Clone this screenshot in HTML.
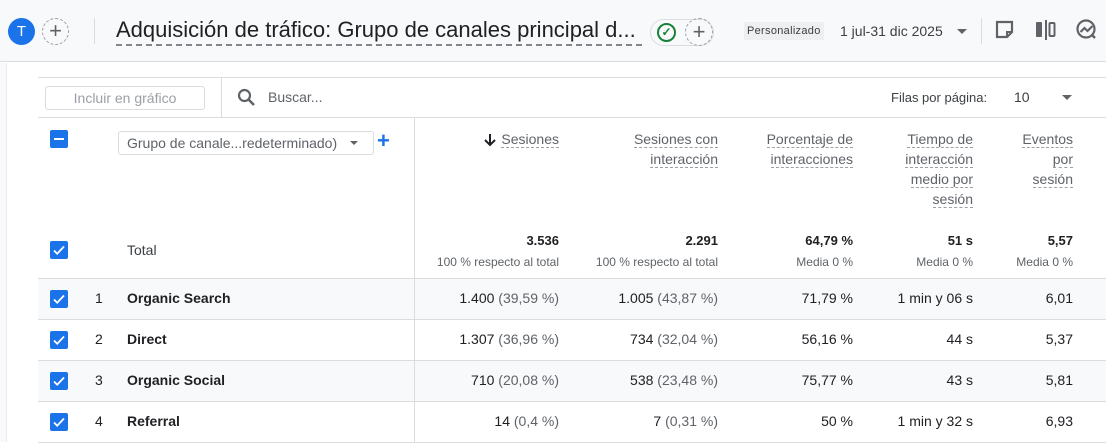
<!DOCTYPE html>
<html><head><meta charset="utf-8"><style>
*{box-sizing:border-box;margin:0;padding:0}
body{width:1106px;height:442px;overflow:hidden;background:#fff;font-family:"Liberation Sans",Arial,sans-serif;color:#202124;position:relative}
.a{position:absolute}
.top{left:0;top:0;width:1106px;height:62px;background:#f8f9fa;border-bottom:1px solid #dadce0}
.r{text-align:right}
.h{font-size:14px;color:#5f6368;line-height:20px}
.h span{border-bottom:1px dashed #9aa0a6}
.cb{width:18px;height:18px;background:#1a73e8;border-radius:2px}
.row{left:38px;width:1068px;height:41px;border-bottom:1px solid #dadce0;font-size:14px}
.g{color:#5f6368}
</style></head><body>
<div class="a top"></div>
<div class="a" style="left:8px;top:18px;width:27px;height:27px;border-radius:50%;background:#1a73e8;color:#fff;font-size:15px;text-align:center;line-height:27px">T</div>
<div class="a" style="left:42px;top:18px;width:27px;height:27px;border-radius:50%;border:1px dashed #9aa0a6;color:#5f6368;font-size:22px;text-align:center;line-height:24px">+</div>
<div class="a" style="left:94px;top:18px;width:1px;height:26px;background:#dadce0"></div>
<div class="a" style="left:116px;top:15px;font-size:22px;line-height:30px;color:#202124;white-space:nowrap;width:526px;overflow:hidden;border-bottom:2px dashed #80868b;height:31px">Adquisición de tráfico: Grupo de canales principal d...</div>
<div class="a" style="left:650px;top:19px;width:64px;height:27px;border:1px solid #dadce0;border-radius:14px"></div>
<div class="a" style="left:657px;top:23px;width:19px;height:19px;border:2px solid #188038;border-radius:50%;color:#188038;font-size:12px;text-align:center;line-height:15px;font-weight:bold">✓</div>
<div class="a" style="left:685px;top:18px;width:28px;height:28px;border-radius:50%;border:1px dashed #9aa0a6;color:#5f6368;font-size:22px;text-align:center;line-height:25px">+</div>
<div class="a" style="left:744px;top:22px;padding:0 3px;background:#edeff1;font-size:11px;color:#3c4043;line-height:18px;letter-spacing:.3px">Personalizado</div>
<div class="a" style="left:840px;top:22px;font-size:14px;color:#3c4043;line-height:18px">1 jul-31 dic 2025</div>
<div class="a" style="left:957px;top:29px;border:5px solid transparent;border-top-color:#5f6368"></div>
<div class="a" style="left:981px;top:18px;width:1px;height:26px;background:#dadce0"></div>
<svg class="a" style="left:994px;top:19px" width="22" height="22" viewBox="0 0 22 22"><path d="M3 3h15v10l-5 5H3z" fill="none" stroke="#5f6368" stroke-width="2.2"/><path d="M13 18v-5h5" fill="none" stroke="#5f6368" stroke-width="2"/></svg>
<svg class="a" style="left:1034px;top:19px" width="24" height="22" viewBox="0 0 24 22"><rect x="2" y="3" width="6" height="15" rx="1" fill="#5f6368"/><rect x="11" y="1" width="2" height="20" fill="#5f6368"/><rect x="15.5" y="4" width="5" height="13" rx="1" fill="none" stroke="#5f6368" stroke-width="2"/></svg>
<svg class="a" style="left:1075px;top:18px" width="24" height="24" viewBox="0 0 24 24"><circle cx="11" cy="11" r="8.5" fill="none" stroke="#5f6368" stroke-width="2.2"/><path d="M5.5 14l4-4 3 3 5-5" fill="none" stroke="#5f6368" stroke-width="2.2"/><path d="M17 17l3 3" stroke="#5f6368" stroke-width="2.5"/></svg>
<div class="a" style="left:0;top:63px;width:7px;height:379px;background:#f8f9fa;border-right:1px solid #e8eaed"></div>
<div class="a" style="left:38px;top:77px;width:1068px;height:1px;background:#dadce0"></div>
<div class="a" style="left:38px;top:117px;width:1068px;height:1px;background:#dadce0"></div>
<div class="a" style="left:221px;top:77px;width:1px;height:41px;background:#dadce0"></div>
<div class="a" style="left:45px;top:86px;width:160px;height:24px;border:1px solid #dadce0;border-radius:3px;font-size:14px;color:#9aa0a6;text-align:center;line-height:22px">Incluir en gráfico</div>
<svg class="a" style="left:236px;top:87px" width="22" height="22" viewBox="0 0 22 22"><circle cx="8.5" cy="8.5" r="5.5" fill="none" stroke="#5f6368" stroke-width="2.2"/><path d="M12.5 12.5l5.5 5.5" stroke="#5f6368" stroke-width="2.6"/></svg>
<div class="a" style="left:268px;top:89px;font-size:14px;color:#5f6368">Buscar...</div>
<div class="a" style="left:891px;top:90px;font-size:13px;color:#3c4043">Filas por página:</div>
<div class="a" style="left:1014px;top:89px;font-size:14px;color:#3c4043">10</div>
<div class="a" style="left:1062px;top:95px;border:5px solid transparent;border-top-color:#5f6368"></div>
<div class="a cb" style="left:50px;top:130px"><div class="a" style="left:4px;top:8px;width:10px;height:2px;background:#fff"></div></div>
<div class="a" style="left:118px;top:131px;width:256px;height:24px;border:1px solid #dadce0;border-radius:3px;font-size:14px;color:#5f6368;line-height:22px;padding-left:8px">Grupo de canale...redeterminado)</div>
<div class="a" style="left:350px;top:141px;border:4px solid transparent;border-top-color:#5f6368"></div>
<div class="a" style="left:377px;top:128px;font-size:22px;color:#1a73e8;font-weight:bold">+</div>
<svg class="a" style="left:483px;top:133px" width="14" height="14" viewBox="0 0 14 14"><path d="M7 1v11M2 7l5 5 5-5" fill="none" stroke="#202124" stroke-width="2"/></svg>
<div class="a h r" style="right:547px;top:129px"><span>Sesiones</span></div>
<div class="a h r" style="right:388px;top:129px"><span>Sesiones con</span><br><span>interacción</span></div>
<div class="a h r" style="right:253px;top:129px"><span>Porcentaje de</span><br><span>interacciones</span></div>
<div class="a h r" style="right:133px;top:129px"><span>Tiempo de</span><br><span>interacción</span><br><span>medio por</span><br><span>sesión</span></div>
<div class="a h r" style="right:33px;top:129px"><span>Eventos</span><br><span>por</span><br><span>sesión</span></div>
<div class="a" style="left:127px;top:242px;font-size:14px;color:#3c4043">Total</div>
<div class="a r" style="right:547px;top:233px;font-size:13px;font-weight:bold">3.536</div>
<div class="a r" style="right:547px;top:255px;font-size:12px;color:#5f6368">100 % respecto al total</div>
<div class="a r" style="right:388px;top:233px;font-size:13px;font-weight:bold">2.291</div>
<div class="a r" style="right:388px;top:255px;font-size:12px;color:#5f6368">100 % respecto al total</div>
<div class="a r" style="right:253px;top:233px;font-size:13px;font-weight:bold">64,79 %</div>
<div class="a r" style="right:253px;top:255px;font-size:12px;color:#5f6368">Media 0 %</div>
<div class="a r" style="right:133px;top:233px;font-size:13px;font-weight:bold">51 s</div>
<div class="a r" style="right:133px;top:255px;font-size:12px;color:#5f6368">Media 0 %</div>
<div class="a r" style="right:33px;top:233px;font-size:13px;font-weight:bold">5,57</div>
<div class="a r" style="right:33px;top:255px;font-size:12px;color:#5f6368">Media 0 %</div>
<div class="a" style="left:38px;top:278px;width:1068px;height:1px;background:#dadce0"></div>
<div class="a row" style="top:279px;background:#f8f9fa"></div>
<div class="a row" style="top:320px"></div>
<div class="a row" style="top:361px;background:#f8f9fa"></div>
<div class="a row" style="top:402px"></div>
<div class="a" style="left:414px;top:117px;width:1px;height:325px;background:#dadce0"></div>
<svg class="a" style="left:50px;top:241px" width="18" height="18"><rect width="18" height="18" rx="2" fill="#1a73e8"/><path d="M4 9.5l3.2 3.2L14 5.5" fill="none" stroke="#fff" stroke-width="1.8"/></svg>
<svg class="a" style="left:50px;top:290px" width="18" height="18"><rect width="18" height="18" rx="2" fill="#1a73e8"/><path d="M4 9.5l3.2 3.2L14 5.5" fill="none" stroke="#fff" stroke-width="1.8"/></svg>
<svg class="a" style="left:50px;top:331px" width="18" height="18"><rect width="18" height="18" rx="2" fill="#1a73e8"/><path d="M4 9.5l3.2 3.2L14 5.5" fill="none" stroke="#fff" stroke-width="1.8"/></svg>
<svg class="a" style="left:50px;top:372px" width="18" height="18"><rect width="18" height="18" rx="2" fill="#1a73e8"/><path d="M4 9.5l3.2 3.2L14 5.5" fill="none" stroke="#fff" stroke-width="1.8"/></svg>
<svg class="a" style="left:50px;top:413px" width="18" height="18"><rect width="18" height="18" rx="2" fill="#1a73e8"/><path d="M4 9.5l3.2 3.2L14 5.5" fill="none" stroke="#fff" stroke-width="1.8"/></svg>
<div style="font-size:14px">
<div class="a" style="left:95px;top:290px">1</div><div class="a" style="left:127px;top:290px;font-weight:bold">Organic Search</div>
<div class="a r" style="right:547px;top:290px">1.400 <span class="g">(39,59 %)</span></div>
<div class="a r" style="right:388px;top:290px">1.005 <span class="g">(43,87 %)</span></div>
<div class="a r" style="right:253px;top:290px">71,79 %</div><div class="a r" style="right:133px;top:290px">1 min y 06 s</div><div class="a r" style="right:33px;top:290px">6,01</div>
<div class="a" style="left:95px;top:331px">2</div><div class="a" style="left:127px;top:331px;font-weight:bold">Direct</div>
<div class="a r" style="right:547px;top:331px">1.307 <span class="g">(36,96 %)</span></div>
<div class="a r" style="right:388px;top:331px">734 <span class="g">(32,04 %)</span></div>
<div class="a r" style="right:253px;top:331px">56,16 %</div><div class="a r" style="right:133px;top:331px">44 s</div><div class="a r" style="right:33px;top:331px">5,37</div>
<div class="a" style="left:95px;top:372px">3</div><div class="a" style="left:127px;top:372px;font-weight:bold">Organic Social</div>
<div class="a r" style="right:547px;top:372px">710 <span class="g">(20,08 %)</span></div>
<div class="a r" style="right:388px;top:372px">538 <span class="g">(23,48 %)</span></div>
<div class="a r" style="right:253px;top:372px">75,77 %</div><div class="a r" style="right:133px;top:372px">43 s</div><div class="a r" style="right:33px;top:372px">5,81</div>
<div class="a" style="left:95px;top:413px">4</div><div class="a" style="left:127px;top:413px;font-weight:bold">Referral</div>
<div class="a r" style="right:547px;top:413px">14 <span class="g">(0,4 %)</span></div>
<div class="a r" style="right:388px;top:413px">7 <span class="g">(0,31 %)</span></div>
<div class="a r" style="right:253px;top:413px">50 %</div><div class="a r" style="right:133px;top:413px">1 min y 32 s</div><div class="a r" style="right:33px;top:413px">6,93</div>
</div>
</body></html>
